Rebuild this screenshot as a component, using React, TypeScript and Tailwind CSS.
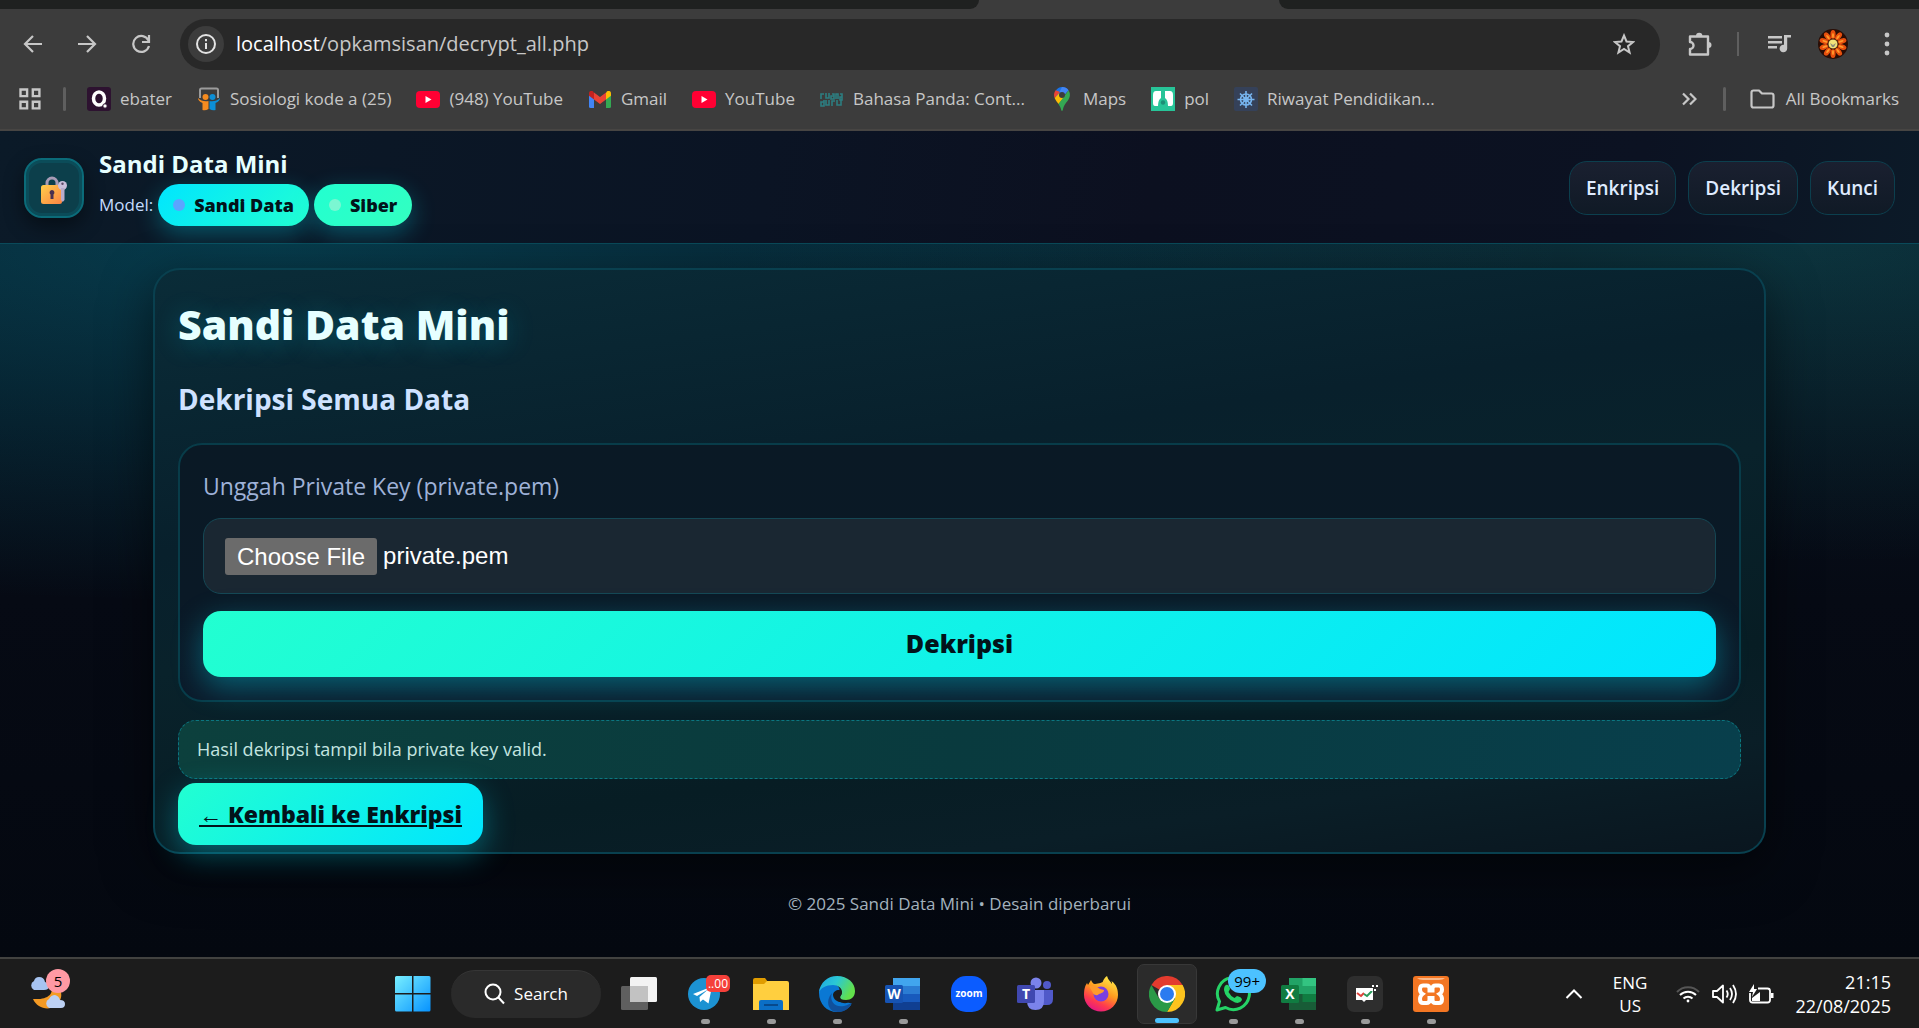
import React from "react";

const UI_FONT = "font-['Open_Sans','Noto_Sans',sans-serif]";

function ToolbarIcon({ label, children }: { label: string; children: React.ReactNode }) {
  return (
    <button type="button" aria-label={label} className="flex size-9 items-center justify-center rounded-full text-[#c7c7c7]">
      {children}
    </button>
  );
}

function TabStrip() {
  return (
    <div className="flex h-[9px] bg-[#3c3c3c]">
      <div className="h-full w-[51%] rounded-br-[12px] bg-[#1f2120]" />
      <div className="h-full w-[300px]" />
      <div className="h-full flex-1 rounded-bl-[12px] bg-[#1f2120]" />
    </div>
  );
}

function Toolbar() {
  return (
    <div className="flex h-[70px] items-center bg-[#3c3c3c] pl-[15px] pr-[14px]">
      <div className="flex w-[165px] gap-[18px]">
        <ToolbarIcon label="Back">
          <svg width="20" height="20" viewBox="0 0 20 20" fill="none" stroke="currentColor" strokeWidth="2.2">
            <path d="M19 10H2.500M10 2L2 10l8 8" />
          </svg>
        </ToolbarIcon>
        <ToolbarIcon label="Forward">
          <svg width="20" height="20" viewBox="0 0 20 20" fill="none" stroke="currentColor" strokeWidth="2.2">
            <path d="M1 10h16.500M10 2l8 8-8 8" />
          </svg>
        </ToolbarIcon>
        <ToolbarIcon label="Reload">
          <svg width="20" height="20" viewBox="0 0 20 20" fill="none" stroke="currentColor" strokeWidth="2.2">
            <path d="M17.500 6.500A8 8 0 1 0 18 12M18 1v7h-7" />
          </svg>
        </ToolbarIcon>
      </div>
      <div className="flex h-[51px] flex-1 items-center rounded-full bg-[#282828] pl-2 pr-[18px]">
        <button type="button" aria-label="Site information" className="flex size-9 items-center justify-center rounded-full bg-[#3c3c3c]">
          <svg width="20" height="20" viewBox="0 0 20 20" fill="none" stroke="#e3e3e3" strokeWidth="2">
            <circle cx="10" cy="10" r="9" />
            <path d="M10 9v6M10 5v2.300" />
          </svg>
        </button>
        <div className="ml-3 flex-1 text-[20px] text-[#c7c7c7]">
          <span className="text-white">localhost</span>/opkamsisan/decrypt_all.php
        </div>
        <ToolbarIcon label="Bookmark this page">
          <svg width="22" height="22" viewBox="0 0 22 22" fill="none" stroke="currentColor" strokeWidth="2">
            <path d="M11 2.500l2.500 6 6.500.5-5 4.200 1.600 6.300L11 16l-5.600 3.500L7 13.200 2 9l6.500-.5z" />
          </svg>
        </ToolbarIcon>
      </div>
      <div className="flex items-center pl-[22px]">
        <ToolbarIcon label="Extensions">
          <svg width="26" height="26" viewBox="0 0 26 26" fill="none" stroke="currentColor" strokeWidth="2.400">
            <path d="M3 5.500h18v18H3v-5.500a3.200 3.200 0 0 0 0-7z" strokeLinejoin="round" />
            <path d="M9 5a3.200 3.200 0 0 1 6.400 0zM21.500 11a3 3 0 0 1 0 6z" fill="currentColor" stroke="none" />
          </svg>
        </ToolbarIcon>
        <div className="ml-[19px] h-6 w-[2px] bg-[#5f5f5f]" />
        <div className="ml-[22px] flex items-center gap-[18px]">
          <ToolbarIcon label="Media controls">
            <svg width="24" height="20" viewBox="0 0 24 20" fill="currentColor">
              <path d="M1 2h14v2.400H1zM1 7h14v2.400H1zM1 12h9v2.400H1zM17 1h7v2.600h-3.800V14.500a3.800 3.800 0 1 1-3.200-3.700z" />
            </svg>
          </ToolbarIcon>
          <ToolbarIcon label="Profile">
            <svg width="30" height="30" viewBox="0 0 30 30">
              <circle cx="15" cy="15" r="15" fill="#2a0d05" />
              {[0, 36, 72, 108, 144, 180, 216, 252, 288, 324].map((a) => (
                <g key={a} transform={`rotate(${a} 15 15)`}>
                  <ellipse cx="15" cy="5.500" rx="2.600" ry="4.500" fill="#e8500d" />
                  <ellipse cx="15" cy="6.500" rx="1" ry="2.600" fill="#ff9a2b" />
                </g>
              ))}
              <circle cx="15" cy="15" r="5" fill="#f2e27a" stroke="#4b1d08" />
              <path d="M12 14l3 2 3-2-2 4h-2z" fill="#8b8d7c" />
            </svg>
          </ToolbarIcon>
          <ToolbarIcon label="Chrome menu">
            <svg width="6" height="24" viewBox="0 0 6 24" fill="currentColor">
              <circle cx="3" cy="3" r="2.400" />
              <circle cx="3" cy="12" r="2.400" />
              <circle cx="3" cy="21" r="2.400" />
            </svg>
          </ToolbarIcon>
        </div>
      </div>
    </div>
  );
}

function YouTubeIcon() {
  return (
    <svg width="24" height="17" viewBox="0 0 24 17">
      <rect width="24" height="17" rx="4" fill="#ff0033" />
      <path d="M9.500 5v7l6-3.500z" fill="#fff" />
    </svg>
  );
}

const bookmarks: { text: string; icon: React.ReactNode }[] = [
  {
    text: "ebater",
    icon: (
      <svg width="24" height="24" viewBox="0 0 24 24">
        <rect width="24" height="24" rx="3" fill="#2d1230" />
        <ellipse cx="12" cy="11.500" rx="5.500" ry="6.500" fill="none" stroke="#fff" strokeWidth="3.500" />
        <circle cx="18" cy="19" r="2.200" fill="#fff" stroke="#2d1230" />
      </svg>
    ),
  },
  {
    text: "Sosiologi kode a (25)",
    icon: (
      <svg width="24" height="24" viewBox="0 0 24 24">
        <path d="M3 11V3q0-1.500 1.500-1.500h15Q21 1.500 21 3v8" fill="none" stroke="#9b9b9b" strokeWidth="2" />
        <circle cx="8.500" cy="10" r="3" fill="#f68b1f" />
        <circle cx="15.500" cy="10" r="3" fill="#0c8fd6" />
        <path d="M1 11q4 4 10.500 3v8q-3 2-6 1V16Q1 14 1 11z" fill="#f68b1f" />
        <path d="M23 11q-4 4-10.500 3v8q3 2 6 1V16Q23 14 23 11z" fill="#0c8fd6" />
      </svg>
    ),
  },
  { text: "(948) YouTube", icon: <YouTubeIcon /> },
  {
    text: "Gmail",
    icon: (
      <svg width="22" height="17" viewBox="0 0 22 17">
        <path d="M0 3v12.500Q0 17 1.500 17H5V6z" fill="#4285f4" />
        <path d="M22 3v12.500q0 1.500-1.500 1.500H17V6z" fill="#34a853" />
        <path d="M17 2v6.500l5-3.800V2.500C22 0 19.500-.8 17.800.5z" fill="#fbbc04" />
        <path d="M0 2.500C0 0 2.500-.8 4.200.5L5 2v6.500L0 4.700z" fill="#c5221f" />
        <path d="M5 8.500V1.500L11 6l6-4.500v7L11 13z" fill="#ea4335" />
      </svg>
    ),
  },
  { text: "YouTube", icon: <YouTubeIcon /> },
  {
    text: "Bahasa Panda: Cont...",
    icon: (
      <svg width="23" height="15" viewBox="0 0 23 15" fill="none" stroke="#2c7d80" strokeWidth="1.600">
        <path d="M1 7V2h3M6 1v5h3V1M12 2h2v5h-3V4h3M16 7V2h2v5M20 2h2v6h-2V5h2M1 10h3v4H1zM4 8v6M6 8v5h3V8M12 14V9h3M17 8v5h4V8" />
      </svg>
    ),
  },
  {
    text: "Maps",
    icon: (
      <svg width="24" height="24" viewBox="0 0 24 24">
        <path d="M12 0a8 8 0 0 1 6.500 3.300L6 11.500 5.500 4Q8 0 12 0z" fill="#1a73e8" />
        <path d="M5.700 3.300A8 8 0 0 0 4.600 11L10 5z" fill="#ea4335" />
        <path d="M4.600 11Q6 14 8.500 17l7-8-6-3z" fill="#fbbc04" />
        <path d="M18.500 3.300Q21 7.500 19 11.500C17 15.500 14 17 12.800 23q-.8 2-1.600 0c-.5-2.500-1.500-4-2.700-6z" fill="#34a853" />
        <path d="M12 0a8 8 0 0 1 6.500 3.300L14 8.500 9.500 5z" fill="#4285f4" />
        <circle cx="12" cy="8" r="3" fill="#3c3c3c" />
      </svg>
    ),
  },
  {
    text: "pol",
    icon: (
      <svg width="24" height="24" viewBox="0 0 24 24">
        <rect width="24" height="24" fill="#27c498" />
        <path d="M5 4h5v7q-3 2-3 8H4q-2 0-2-3V8q0-4 3-4zM19 4h-5v7q3 2 3 8h3q2 0 2-3V8q0-4-3-4z" fill="#fff" />
        <circle cx="12" cy="15.500" r="2.200" fill="#1d8f77" />
      </svg>
    ),
  },
  {
    text: "Riwayat Pendidikan...",
    icon: (
      <svg width="24" height="24" viewBox="0 0 24 24" fill="none" stroke="#77b5ef" strokeWidth="1.600">
        <rect width="24" height="24" rx="2" fill="#354159" stroke="none" />
        <circle cx="12" cy="12.500" r="5.500" />
        <circle cx="12" cy="12.500" r="2" />
        <path d="M12 4v17M3.500 12.500h17M6 6.500l12 12M18 6.500l-12 12" />
      </svg>
    ),
  },
];

function BookmarksBar() {
  return (
    <nav aria-label="Bookmarks" className="flex h-[52px] items-start border-b-2 border-[#474543] bg-[#3c3c3c] pl-[19px] pr-5 pt-2 text-[17px] leading-6 text-[#c7c7c7]">
      <button type="button" aria-label="Apps" className="flex h-6 items-center">
        <svg width="22" height="22" viewBox="0 0 22 22" fill="none" stroke="currentColor" strokeWidth="2.400">
          <path d="M1.500 1.500h6.600v6.600H1.500zM13.800 1.500h6.600v6.600h-6.600zM1.500 13.800h6.600v6.600H1.500zM13.800 13.800h6.600v6.600h-6.600z" />
        </svg>
      </button>
      <div className="ml-[22px] h-6 w-[3px] rounded-full bg-[#5f5f5f]" />
      <ul className="ml-[21px] flex gap-[25px]">
        {bookmarks.map((b, i) => (
          <li key={i}>
            <a href="#" className="flex items-center gap-[9px] whitespace-nowrap">
              <span className="flex h-6 w-6 items-center justify-center">{b.icon}</span>
              {b.text}
            </a>
          </li>
        ))}
      </ul>
      <button type="button" aria-label="More bookmarks" className="ml-auto flex h-6 items-center">
        <svg width="16" height="14" viewBox="0 0 16 14" fill="none" stroke="currentColor" strokeWidth="2.200">
          <path d="M2 1.500L7.500 7 2 12.500M9 1.500L14.500 7 9 12.500" />
        </svg>
      </button>
      <div className="ml-[26px] h-6 w-[3px] rounded-full bg-[#5f5f5f]" />
      <button type="button" className="ml-6 flex items-center gap-[11px] whitespace-nowrap">
        <svg width="25" height="20" viewBox="0 0 25 20" fill="none" stroke="currentColor" strokeWidth="2.200" strokeLinejoin="round">
          <path d="M1.500 3.500q0-2 2-2h5.500l3 3h9.500q2 0 2 2v10q0 2-2 2h-18q-2 0-2-2z" />
        </svg>
        All Bookmarks
      </button>
    </nav>
  );
}

function LockIcon() {
  return (
    <svg width="28" height="34" viewBox="0 -4 28 34">
      <defs>
        <linearGradient id="lock" x1="0" y1="0" x2="1" y2="1">
          <stop offset="0" stopColor="#ffce4a" />
          <stop offset="1" stopColor="#fb8344" />
        </linearGradient>
      </defs>
      <path d="M7 11V8a5 5 0 0 1 10 0v3" fill="none" stroke="#a79bb5" strokeWidth="3" />
      <rect x="1" y="10" width="21" height="19" rx="2.500" fill="url(#lock)" />
      <path d="M12 15a2.600 2.600 0 0 1 1.500 4.600V24h-3v-4.400A2.600 2.600 0 0 1 12 15z" fill="#4a3050" />
      <circle cx="22.500" cy="10.500" r="4.500" fill="#cbbfdb" />
      <path d="M21 13h3.500v12l-1.700 2-1.800-2z" fill="#b9accb" />
      <circle cx="22.500" cy="8.700" r="1.200" fill="#5c4a66" />
    </svg>
  );
}

function Header() {
  const links = ["Enkripsi", "Dekripsi", "Kunci"];
  return (
    <header className="flex items-center justify-between border-b border-[#0a4a5a] bg-[linear-gradient(100deg,#0b1a28_0%,#0b1424_40%,#0c1020_60%,#0c1222_85%,#0c1a28_100%)] px-6 pb-[17px] pt-[19px]">
      <div className="flex items-center gap-[15px]">
        <div className="flex size-[60px] items-center justify-center rounded-[18px] border-2 border-[#0b6b79] bg-[#0c3f4b] shadow-[inset_0_0_0_3px_#0b4c59,0_8px_20px_rgba(0,0,0,0.45)]">
          <LockIcon />
        </div>
        <div>
          <div className="text-[24px] font-bold leading-[28px] text-[#e6ffff]">Sandi Data Mini</div>
          <div className="mt-[6px] flex items-center gap-[5px] text-[17px] text-[#c5dcff]">
            Model:
            <span className="flex h-[42px] items-center gap-[9px] rounded-full bg-[linear-gradient(135deg,#00e5ff,#22ffd1)] px-[15px] text-[18px] font-extrabold text-[#02131a] shadow-[0_8px_24px_rgba(0,229,255,0.3)]">
              <span className="size-3 rounded-full bg-[#5ba4ff]" />
              Sandi Data
            </span>
            <span className="flex h-[42px] items-center gap-[9px] rounded-full bg-[linear-gradient(135deg,#22ffd1,#33ffc0)] px-[15px] text-[18px] font-extrabold text-[#02131a] shadow-[0_8px_24px_rgba(0,229,255,0.3)]">
              <span className="size-3 rounded-full bg-[#7bf7d2]" />
              Siber
            </span>
          </div>
        </div>
      </div>
      <nav aria-label="Main" className="flex gap-3">
        {links.map((l) => (
          <a key={l} href="#" className="flex h-[54px] items-center rounded-[18px] border border-[#0c3f4e] bg-[linear-gradient(#1a2030,#101a26)] px-4 text-[19px] font-semibold text-[#dfebff]">
            {l}
          </a>
        ))}
      </nav>
    </header>
  );
}

function DecryptPage() {
  return (
    <div className="flex-1 bg-[radial-gradient(ellipse_1300px_360px_at_14%_0%,rgba(0,200,225,0.22),transparent),radial-gradient(ellipse_1100px_320px_at_94%_0%,rgba(34,230,215,0.15),transparent),linear-gradient(#081422,#060a14_50%,#040810)] px-[153px] pt-6">
      <main className="rounded-[27px] border-2 border-[#09404f] bg-[linear-gradient(172deg,#0a2c38_0%,#08202c_35%,#09222b_50%,#071d24_74%,#0a1e27_86%,#0a161f_100%)] px-[23px] pb-[7px] pt-7 shadow-[0_16px_50px_rgba(0,0,0,0.5)]">
        <h1 className="text-[41px] font-extrabold leading-[52px] text-[#e6ffff] [text-shadow:0_4px_26px_rgba(0,229,255,0.25)]">Sandi Data Mini</h1>
        <h2 className="mt-[31px] text-[28px] font-bold leading-9 text-[#cfe2ff]">Dekripsi Semua Data</h2>
        <form className="mt-[26px] rounded-[24px] border-2 border-[#083c49] bg-[linear-gradient(#0a1925,#0a1926_60%,#0b1a2a)] px-[23px] pb-[23px] pt-6" onSubmit={(e) => e.preventDefault()}>
          <label htmlFor="private-key" className="block text-[23px] leading-[34px] text-[#9fb2d8]">
            Unggah Private Key (private.pem)
          </label>
          <label htmlFor="private-key" className="mt-[15px] flex h-[76px] items-center gap-[6px] rounded-[18px] border border-[#154754] bg-[#1a2732] px-[21px] font-['Liberation_Sans',Arial,sans-serif] text-[24px] text-white">
            <input id="private-key" type="file" className="sr-only" />
            <span className="rounded-[3px] bg-[#6b6b6b] px-3 py-1 leading-[29px]">Choose File</span>
            <span>private.pem</span>
          </label>
          <button type="submit" className="mt-[17px] h-[66px] w-full rounded-[18px] bg-[linear-gradient(135deg,#22ffd1,#00e5ff)] text-[25px] font-extrabold text-[#02131a] shadow-[0_10px_30px_rgba(0,229,255,0.35)]">
            Dekripsi
          </button>
        </form>
        <p className="mt-[18px] flex h-[59px] items-center rounded-[18px] border border-dashed border-[#0b7680] bg-[linear-gradient(100deg,#0c403d,#093a3e_50%,#083f4c)] px-[18px] text-[18px] text-[#c4e5e0]">
          Hasil dekripsi tampil bila private key valid.
        </p>
        <a href="#" className="mt-1 inline-flex h-[62px] items-center rounded-[18px] bg-[linear-gradient(135deg,#22ffd1,#00e5ff)] px-[21px] text-[23px] font-extrabold text-[#02131a] underline shadow-[0_10px_30px_rgba(0,229,255,0.35)]">
          ← Kembali ke Enkripsi
        </a>
      </main>
      <footer className="py-9 text-center text-[17px] leading-[27px] text-[#a3b2bd]">© 2025 Sandi Data Mini • Desain diperbarui</footer>
    </div>
  );
}

const apps: { name: string; running?: boolean; active?: boolean; badge?: React.ReactNode; icon: React.ReactNode }[] = [
  {
    name: "Task view",
    icon: (
      <svg width="36" height="36" viewBox="0 0 36 36">
        <rect x="9" y="1" width="27" height="25" rx="1.500" fill="#f3f3f3" />
        <rect x="0" y="10" width="27" height="24" rx="1.500" fill="#5f5f5f" />
        <rect x="9" y="10" width="18" height="16" fill="#c2c2c2" />
      </svg>
    ),
  },
  {
    name: "Telegram",
    running: true,
    badge: <span className="absolute -right-[7px] -top-px rounded-[5px] bg-[#f5403a] px-[2px] text-[12px] leading-[17px] text-white">..00</span>,
    icon: (
      <svg width="36" height="36" viewBox="0 0 36 36">
        <circle cx="17" cy="18" r="16" fill="#1c92d2" />
        <path d="M6 18l19-7.500-3.500 17-5.500-4-3 2.500-.5-5 8.500-7.500-11 6.500z" fill="#fff" />
      </svg>
    ),
  },
  {
    name: "File Explorer",
    running: true,
    icon: (
      <svg width="36" height="36" viewBox="0 0 36 36">
        <path d="M0 4q0-2 2-2h10l3 4h18v8H0z" fill="#e09c00" />
        <path d="M0 8h11l3-3h20q2 0 2 2v27H0z" fill="#ffcf3f" />
        <path d="M6 34v-8q0-2 2-2h20q2 0 2 2v8z" fill="#0b6fc6" />
        <path d="M11 29h14" stroke="#07498c" strokeWidth="2" />
      </svg>
    ),
  },
  {
    name: "Edge",
    running: true,
    icon: (
      <svg width="36" height="36" viewBox="0 0 36 36">
        <defs>
          <linearGradient id="edge" x1="0" y1="0" x2="1" y2="0.4">
            <stop offset="0" stopColor="#1da5e6" />
            <stop offset="0.5" stopColor="#2bc8d4" />
            <stop offset="1" stopColor="#62e04b" />
          </linearGradient>
        </defs>
        <path d="M0 17C0 8 8 4 16 8c6 3 6 9 0 10 0 6 6 10 12 9 3-.5 5 .5 4 2-3 4-8 7-14 7C8 36 0 28 0 17z" fill="#0a78d4" />
        <path d="M0 17C1 6 9 0 18 0c11 0 18 7 18 15 0 6-4 9-9 9-4 0-6-1-6-3 0-1 2-2 2-5 0-4-4-7-9-7-7 0-13 3-14 8z" fill="url(#edge)" />
        <path d="M13 17c-3 8 3 15 12 13 4-1 6-2.500 8-3-3 6-8 9-14 9-10 0-13-11-6-19z" fill="#10509c" />
        <path d="M14 19c0-3 3-5 6-5 3 .5 4 3 1.500 6-1.500 3 1.500 5 6 5-6 3-13 0-13.500-6z" fill="#1c1c1c" />
      </svg>
    ),
  },
  {
    name: "Word",
    running: true,
    icon: (
      <svg width="36" height="36" viewBox="0 0 36 36">
        <path d="M8 2h27v8H8z" fill="#41a5ee" />
        <path d="M8 10h27v8H8z" fill="#2b7cd3" />
        <path d="M8 18h27v8H8z" fill="#185abd" />
        <path d="M8 26h27v8H8z" fill="#103f91" />
        <rect y="9" width="18" height="18" rx="1.500" fill="#1653b3" />
        <text x="9" y="23" textAnchor="middle" fontSize="14" fontWeight="700" fill="#fff">W</text>
      </svg>
    ),
  },
  {
    name: "Zoom",
    icon: (
      <svg width="36" height="36" viewBox="0 0 36 36">
        <rect width="36" height="36" rx="15" fill="#0b5cff" />
        <text x="18" y="21" textAnchor="middle" fontSize="10" fontWeight="700" fill="#fff">zoom</text>
      </svg>
    ),
  },
  {
    name: "Teams",
    icon: (
      <svg width="36" height="36" viewBox="0 0 36 36">
        <circle cx="30" cy="9" r="4" fill="#5059c9" />
        <path d="M25 14h11v9q0 6-6 6h-5z" fill="#5059c9" />
        <circle cx="19" cy="7" r="5.500" fill="#7b83eb" />
        <path d="M10 14h17v11q0 9-8.500 9T10 25z" fill="#7b83eb" />
        <rect y="9" width="18" height="18" rx="1.500" fill="#4048b0" />
        <text x="9" y="23" textAnchor="middle" fontSize="14" fontWeight="700" fill="#fff">T</text>
      </svg>
    ),
  },
  {
    name: "Firefox",
    icon: (
      <svg width="36" height="36" viewBox="0 0 36 36">
        <defs>
          <linearGradient id="fox" x1="0.8" y1="0" x2="0.3" y2="1">
            <stop offset="0" stopColor="#fff04a" />
            <stop offset="0.45" stopColor="#ff9a1f" />
            <stop offset="0.75" stopColor="#ff3b4d" />
            <stop offset="1" stopColor="#e31587" />
          </linearGradient>
        </defs>
        <path d="M24 0c1 4 4 6 5 8 0-1 0-2-.5-3C34 9 35 14 35 19a17 16.500 0 0 1-34 0c0-6 1-9 3-12l1 2 3-5c1 2 2 4 4 4 4-1 8-1 8-3 1-2 2-4 4-5z" fill="url(#fox)" />
        <circle cx="18" cy="18" r="7.500" fill="#7b3fe0" />
        <path d="M6 10c4-1 8 0 11 3l4 1c0 3-3 3-5 4-2 2-4 1-5.500 0z" fill="#ff9a2c" />
      </svg>
    ),
  },
  {
    name: "Chrome",
    active: true,
    icon: (
      <svg width="36" height="36" viewBox="0 0 36 36">
        <path d="M18 18L2.400 9A18 18 0 0 1 33.600 9z" fill="#e33b2e" />
        <path d="M18 9h15.600A18 18 0 0 1 18 36l8-14z" fill="#fcc31e" />
        <path d="M2.400 9A18 18 0 0 0 18 36l8-13.500-16 0z" fill="#2a9a47" />
        <path d="M18 18L33.600 9H18z" fill="#fcc31e" />
        <circle cx="18" cy="18" r="9" fill="#fff" />
        <circle cx="18" cy="18" r="7" fill="#2b7bf0" />
      </svg>
    ),
  },
  {
    name: "WhatsApp",
    running: true,
    badge: <span className="absolute -right-[15px] -top-[7px] rounded-full bg-[#4cc2ff] px-[6px] text-[15px] leading-6 text-black">99+</span>,
    icon: (
      <svg width="36" height="36" viewBox="0 0 36 36">
        <path d="M2 34l2.500-8.500A16 16 0 1 1 10.500 31.500z" fill="none" stroke="#25d366" strokeWidth="3" strokeLinejoin="round" />
        <path d="M11 9q3-1 4 4l-1.500 3q2 4 6 6l2.500-2q5 1 5 4-2 4-7 2.500Q10 22 9 14q0-4 2-5z" fill="#25d366" />
      </svg>
    ),
  },
  {
    name: "Excel",
    running: true,
    icon: (
      <svg width="36" height="36" viewBox="0 0 36 36">
        <path d="M8 2h27v32H8z" fill="#21a366" />
        <path d="M21.500 2H35v8H21.500z" fill="#33c481" />
        <path d="M8 18h27v16H8z" fill="#185c37" />
        <path d="M21.500 18H35v8H21.500z" fill="#107c41" />
        <rect y="9" width="18" height="18" rx="1.500" fill="#107c41" />
        <text x="9" y="23" textAnchor="middle" fontSize="14" fontWeight="700" fill="#fff">X</text>
      </svg>
    ),
  },
  {
    name: "Chat notes",
    running: true,
    icon: (
      <svg width="36" height="36" viewBox="0 0 36 36">
        <rect width="36" height="36" rx="7" fill="#2e2e2e" />
        <path d="M9 12h17v12h-7l-2 2-2-2H9z" fill="#fff" />
        <path d="M10 17l4 3 3-3" fill="none" stroke="#e0413a" strokeWidth="2" />
        <path d="M17 18l3 2 5-5" fill="none" stroke="#2b9a5b" strokeWidth="2" />
        <path d="M23 12h3v3h-3zM25 9h2v2h-2zM29 9h2v2h-2zM27 13h2v2h-2z" fill="#fff" />
      </svg>
    ),
  },
  {
    name: "XAMPP",
    running: true,
    icon: (
      <svg width="36" height="36" viewBox="0 0 36 36">
        <rect width="36" height="36" rx="3" fill="#f37623" />
        <path d="M4 2h28q-2 2-6 2H10Q6 4 4 2z" fill="#fbb98a" />
        <path d="M10 9.500h3.500q3 0 3 3v2h3v-2q0-3 3-3H26q3 0 3 4 0 3-2.500 4.500Q29 20 29 23q0 4-3 4h-3.500q-3 0-3-3v-2h-3v2q0 3-3 3H10q-3 0-3-4 0-3 2.500-5Q7 16.500 7 13.500q0-4 3-4z" fill="none" stroke="#fff" strokeWidth="4" />
      </svg>
    ),
  },
];

function Taskbar() {
  return (
    <div className="grid h-[71px] grid-cols-[383fr_auto_458fr] items-center border-t-2 border-[#424240] bg-[#1c1c1c] text-white">
      <div className="pl-[29px]">
        <button type="button" aria-label="Weather" className="relative -mt-2 block h-[42px] w-[42px]">
          <svg width="42" height="42" viewBox="0 0 42 42">
            <path d="M22 14c4 12-4 17-18 16 4 9 15 12 22 7 9-6 9-19-4-23z" fill="#f49a24" />
            <path d="M5 21a5 5 0 0 1 0-9q1-4 5-4 5 0 6 5 4 1 4 4 0 4-5 4z" fill="#a7c4f2" />
            <path d="M20 39a5 5 0 0 1 0-9q2-4 6-4 4 1 5 5 5 0 5 4t-4 4z" fill="#bcd0f3" />
          </svg>
          <span className="absolute left-[17px] top-0 size-[24px] rounded-full bg-[#ff99a4] text-center text-[15px] leading-6 text-black">5</span>
        </button>
      </div>
      <div className="flex items-center gap-[6px]">
        <button type="button" aria-label="Start" className="flex size-[60px] items-center justify-center">
          <svg width="36" height="36" viewBox="0 0 36 36">
            <defs>
              <linearGradient id="win" gradientUnits="userSpaceOnUse" x1="0" y1="0" x2="36" y2="36">
                <stop offset="0" stopColor="#78efff" />
                <stop offset="1" stopColor="#0591ff" />
              </linearGradient>
            </defs>
            <path d="M0 1.500Q0 0 1.500 0H17v17H0zM18.500 0H34q1.500 0 1.500 1.500V17h-17zM0 18.500h17v17H1.500Q0 35.500 0 34zM18.500 18.500h17V34q0 1.500-1.500 1.500H18.500z" fill="url(#win)" />
          </svg>
        </button>
        <button type="button" className="mx-[2px] flex h-12 w-[150px] items-center justify-center gap-2 rounded-full border-t border-[#363636] bg-[#2a2a2a] text-[17px]">
          <svg width="22" height="22" viewBox="0 0 22 22" fill="none" stroke="#fff" strokeWidth="2">
            <circle cx="9" cy="9" r="7.500" />
            <path d="M14 14l6 6.500" />
          </svg>
          Search
        </button>
        {apps.map((a) => (
          <button
            key={a.name}
            type="button"
            aria-label={a.name}
            className={
              a.active
                ? "flex h-[60px] w-[60px] flex-col items-center justify-between rounded-[7px] border border-[#383838] bg-[#2b2b2b] pb-0 pt-[11px]"
                : "flex h-[60px] w-[60px] flex-col items-center justify-between pt-3"
            }
          >
            <span className="relative block size-9">
              {a.icon}
              {a.badge}
            </span>
            {a.active && <span className="h-[5px] w-6 rounded-full bg-[#4cc2ff]" />}
            {a.running && <span className="h-[5px] w-[9px] rounded-full bg-[#9a9a9a]" />}
          </button>
        ))}
      </div>
      <div className="flex items-center justify-end pr-7 text-[18px] leading-6">
        <button type="button" aria-label="Show hidden icons" className="mr-[30px]">
          <svg width="18" height="10" viewBox="0 0 18 10" fill="none" stroke="#fff" strokeWidth="2">
            <path d="M1.500 9L9 1.500 16.500 9" />
          </svg>
        </button>
        <button type="button" className="mr-[29px] text-center text-[17px] leading-[23px]">
          ENG
          <br />
          US
        </button>
        <button type="button" aria-label="Network, volume and battery" className="mr-[21px] flex items-center gap-3">
          <svg width="24" height="18" viewBox="0 0 24 18" fill="none" stroke="#fff" strokeWidth="2">
            <path d="M1 7a15 15 0 0 1 22 0" stroke="#555" />
            <path d="M4 10a11.500 11.500 0 0 1 16 0M7.500 13.500a6.500 6.500 0 0 1 9 0" />
            <circle cx="12" cy="16" r="1.400" fill="#fff" stroke="none" />
          </svg>
          <svg width="25" height="20" viewBox="0 0 25 20" fill="none" stroke="#fff" strokeWidth="1.800">
            <path d="M1 7h4l6-5.500v17L5 13H1zM14.500 6.500q2.500 3.500 0 7M18 4q4 6 0 12M21 1q6 9 0 18" strokeLinejoin="round" />
          </svg>
          <svg width="25" height="20" viewBox="0 0 25 20" fill="none" stroke="#fff" strokeWidth="1.800">
            <path d="M9 4.500h9.500q2.500 0 2.500 2.500v9q0 2.500-2.500 2.500h-15Q1 18.500 1 16V9" />
            <path d="M3 17h8V8L3 14zM22 9h2.500v5H22zM5 0L0 8h4l-1 5 5-8H5z" fill="#fff" stroke="none" />
          </svg>
        </button>
        <button type="button" className="text-right">
          21:15
          <br />
          22/08/2025
        </button>
      </div>
    </div>
  );
}

export default function App() {
  return (
    <div className={`flex min-h-screen flex-col ${UI_FONT}`}>
      <TabStrip />
      <Toolbar />
      <BookmarksBar />
      <Header />
      <DecryptPage />
      <Taskbar />
    </div>
  );
}
